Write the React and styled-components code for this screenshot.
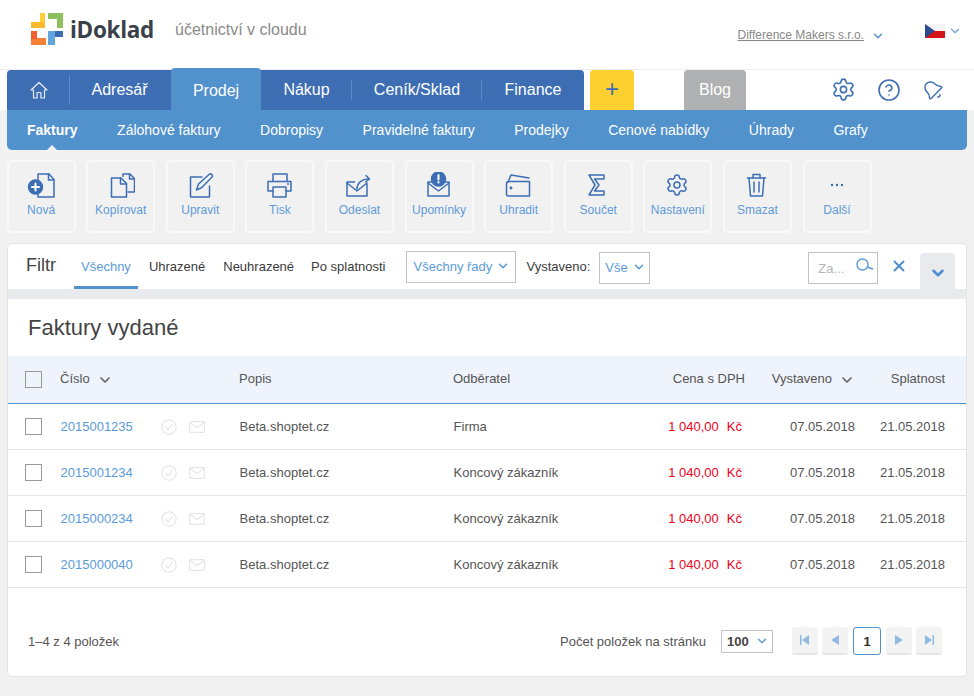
import React from 'react';
import styled, { createGlobalStyle } from 'styled-components';
import { ChevronDown, Settings, CircleHelp, Bell, X } from 'lucide-react';

const Global = createGlobalStyle`
  html, body { margin: 0; padding: 0; background: #f1f1f1; }
  body { font-family: "Liberation Sans", Arial, sans-serif; color: #444; width: 974px; height: 696px; overflow: hidden; }
  * { box-sizing: border-box; }
`;

const Page = styled.div`display: flex; flex-direction: column; width: 974px; height: 696px;`;
const Header = styled.header`
  height: 70px; background: #fff; border-bottom: 1px solid #eee;
  display: flex; align-items: center; padding: 0 12px 0 31px;
`;
const Brand = styled.div`display: flex; align-items: center; gap: 7px; margin-top: -11px;`;
const BrandName = styled.span`font: 700 22.5px "Open Sans", sans-serif; color: #39424b; letter-spacing: -0.3px;`;
const Slogan = styled.span`font-size: 16px; color: #8a8a8a; margin-left: 21px; margin-top: -9px;`;
const Company = styled.a`font-size: 12px; color: #888; text-decoration: underline; margin-left: auto; margin-top: 0;`;
const CompanyChevron = styled(ChevronDown)`color: #5b96d2; margin-left: 7px; margin-top: 2px;`;
const Lang = styled.div`display: flex; align-items: center; gap: 3px; margin-left: 40px; margin-top: -8px;`;

const NavStrip = styled.nav`height: 40px; background: #fff; display: flex; padding: 0 7px;`;
const NavTabs = styled.div`display: flex; background: #3d6eb4; border-radius: 4px 4px 0 0; height: 40px;`;
const NavTab = styled.a`
  width: ${p => p.$w}px; height: ${p => (p.$active ? 42 : 40)}px;
  margin-top: ${p => (p.$active ? -2 : 0)}px;
  padding-top: ${p => (p.$active ? 3 : 0)}px;
  padding-right: ${p => p.$pr || 0}px;
  background: ${p => (p.$active ? '#5191cc' : 'transparent')};
  border-radius: ${p => (p.$active ? '4px 4px 0 0' : '0')};
  color: #fff; font-size: 16px; position: relative;
  display: flex; align-items: center; justify-content: center;
  padding-bottom: ${p => (p.$active ? 0 : 1)}px;
  ${p => p.$sep && `
    &::after { content: ""; position: absolute; right: 0; top: 10px; height: 20px; width: 1px; background: #5f8cc6; }
  `}
  ${p => p.$home && `
    &::after { content: ""; position: absolute; right: 0; top: 5px; height: 30px; width: 1px; background: #5f8cc6; }
  `}
`;
const PlusTab = styled.a`
  width: 44px; height: 40px; margin-left: 6px; background: #fdcf2f; color: #3d6eb4; border-radius: 4px 4px 0 0;
  display: flex; align-items: center; justify-content: center; font-size: 24px; padding-bottom: 2px; 
`;
const BlogTab = styled.a`
  width: 62px; height: 40px; margin-left: 50px; background: #b0b1b3; color: #fff; border-radius: 4px 4px 0 0;
  display: flex; align-items: center; justify-content: center; font-size: 16px; padding-bottom: 1px;
`;
const NavIcons = styled.div`display: flex; align-items: center; margin-left: 85px; gap: 21px; color: #3d6eb4; padding-bottom: 1px;`;
const TiltBell = styled(Bell)`transform: rotate(-45deg);`;

const SubNav = styled.div`
  height: 40px; margin: 0 7px; background: #5191cc; border-radius: 0 0 5px 5px;
  display: flex; align-items: center; gap: 39.5px; padding: 0 0 1px 20px;
`;
const SubItem = styled.a`
  color: #fff; font-size: 14px; font-weight: ${p => (p.$active ? 700 : 400)}; position: relative;
  ${p => p.$active && `
    &::after { content: ""; position: absolute; left: 50%; margin-left: -6px; top: 23px;
      border: 6px solid transparent; border-top: 0; border-bottom: 6px solid #f1f1f1; }
  `}
`;

const Toolbar = styled.div`display: flex; gap: 10.6px; padding: 10px 0 10px 6.6px; height: 93px;`;
const ToolButton = styled.a`
  width: 69px; height: 73px; border: 2px solid #f9f9f9; border-radius: 5px; flex: none;
  display: flex; flex-direction: column; align-items: center; padding-top: 10px;
  color: #5f9ad8; font-size: 12px;
`;
const ToolIcon = styled.svg`
  width: 28px; height: 26px; margin-bottom: 5px; fill: none; stroke: #3d6eb4; stroke-width: 1.5;
  stroke-linejoin: round; stroke-linecap: round;
`;

const Panel = styled.section`
  margin: 0 7px; height: 434px; background: #fff; border: 1px solid #e4e4e4; border-radius: 5px;
  display: flex; flex-direction: column;
`;
const FilterRow = styled.div`height: 45px; display: flex; align-items: flex-start; padding-left: 18px;`;
const FilterTitle = styled.span`font-size: 18px; color: #444; margin-top: 11px; width: 48px;`;
const FilterTab = styled.a`
  height: 45px; padding: 15px 7px 0; font-size: 13px; margin-right: ${p => p.$mr || 0}px;
  color: ${p => (p.$active ? '#5b9bd9' : '#3c3c3c')};
  border-bottom: 3px solid ${p => (p.$active ? '#5191cc' : 'transparent')};
`;
const Select = styled.div`
  height: ${p => p.$h}px; width: ${p => p.$w}px; margin-top: ${p => p.$top}px; margin-left: ${p => p.$ml}px;
  border: 1px solid #bfc1cb; display: flex; align-items: center; padding: 0 0 2px ${p => p.$pl}px; gap: 4px;
  color: #5b9bd9; font-size: 13px;
`;
const FilterLabel = styled.span`font-size: 13px; color: #3c3c3c; margin: 15px 0 0 11px;`;
const SearchBox = styled.div`
  width: 70px; height: 32px; margin: 8px 0 0 158px; border: 1px solid #bfc1cb; display: flex; align-items: center;
  padding-left: 9px; color: #b5b5b5; font-size: 13px; position: relative;
`;
const SearchGlyph = styled.svg`
  position: absolute; left: 47px; top: 5px; width: 18px; height: 16px; fill: none; stroke: #5b9bd9; stroke-width: 1.4;
`;
const ClearIcon = styled(X)`color: #4f8ed2; margin: 13px 0 0 12px;`;
const CollapseTab = styled.div`
  width: 35px; height: 36px; margin: 9px 0 0 12px; background: #e8eaed; border-radius: 4px 4px 0 0; color: #4f8ed2;
  display: flex; align-items: center; justify-content: center; padding-top: 4px;
`;
const Band = styled.div`height: 10px; background: #e8eaed;`;
const Title = styled.h1`font-size: 22px; font-weight: 400; color: #444; margin: 0; height: 57px; padding: 17px 0 0 20px; line-height: 24px;`;

const COLS = '35px 179px 214px 192px 100px 110px 90px';
const HeadRow = styled.div`
  display: grid; grid-template-columns: ${COLS}; height: 48px; align-items: center; padding: 0 0 0 17px;
  background: #eff3fb; border-bottom: 1px solid #5191cc; font-size: 13px; color: #555;
`;
const Row = styled.div`
  display: grid; grid-template-columns: ${COLS}; height: 46px; align-items: center; padding: 0 0 0 17px;
  border-bottom: 1px solid #e4e4e4; font-size: 13px; color: #555;
`;
const Box = styled.span`display: block; width: 17px; height: 17px; border: 1px solid #7b7b7b; outline: 0.5px solid #9a9a9a; outline-offset: -1.5px;`;
const HeadCell = styled.div`
  display: flex; align-items: center; padding-bottom: 3px;
  justify-content: ${p => (p.$right ? 'flex-end' : 'flex-start')};
`;
const SortIcon = styled(ChevronDown)`color: #666; margin-left: ${p => p.$ml}px; margin-top: 3px;`;
const NumberCell = styled.div`display: flex; align-items: center;`;
const InvoiceLink = styled.a`color: #5b9bd9; width: 101px; padding: 0 0 1px 0.5px;`;
const FaintIcon = styled.svg`fill: none; stroke: #e6e6e6; stroke-width: 1.2; margin: 1px ${p => p.$mr || 0}px 0 0;`;
const TextCell = styled.div`padding: 0 0 1px 0.6px;`;
const PriceCell = styled.div`color: #f0001c; text-align: right; padding: 0 3px 1px 0; white-space: nowrap;`;
const Currency = styled.span`margin-left: 8px;`;
const DateCell = styled.div`text-align: right; padding-bottom: 1px; white-space: nowrap;`;

const Footer = styled.div`flex: 1; display: flex; align-items: center; padding: 18px 24px 0 20px; font-size: 13px; color: #555;`;
const FooterCount = styled.span`margin-right: auto;`;
const PerPage = styled.div`
  width: 52px; height: 23px; margin-left: 15px; border: 1px solid #bfc1cb; display: flex; align-items: center; padding-left: 5px;
  gap: 6px; font-weight: 700; color: #444;
`;
const Pager = styled.div`display: flex; gap: 4px; margin-left: 19px;`;
const PageBtn = styled.a`
  width: ${p => (p.$active ? 28 : 26)}px; height: 28px; border-radius: 3px;
  margin: ${p => (p.$active ? '0 1px' : '0')};
  background: ${p => (p.$active ? '#fff' : '#f3f3f3')};
  border: ${p => (p.$active ? '1px solid #5191cc' : 'none')};
  border-bottom: ${p => (p.$active ? '1px solid #5191cc' : '2px solid #e6e6e6')};
  display: flex; align-items: center; justify-content: center; font-weight: 700; color: #333; font-size: 13px;
`;
const PagerGlyph = styled.svg`width: 12px; height: 12px; fill: #8fbbe2;`;

const Logo = () => (
  <svg width="32" height="32" viewBox="31 13 32 32">
    <path d="M40 13h5v15H31v-6h9z" fill="#fbb92d" />
    <path d="M40 13h5v9h-5z" fill="#fdcf2f" />
    <path d="M48 13h15v15h-6v-9h-9z" fill="#8fc060" />
    <path d="M31 31h6v7h9v7H31z" fill="#f47f36" />
    <path d="M31 31h6v8h-6z" fill="#ee5e2e" />
    <path d="M48 31h15v6h-8v8h-7z" fill="#62a5dd" />
    <path d="M55 31h8v6h-8z" fill="#3d6eb4" />
  </svg>
);

const Flag = () => (
  <svg width="20" height="14" viewBox="0 0 20 14">
    <rect width="20" height="7" fill="#f4f4f6" />
    <rect y="7" width="20" height="7" fill="#d7141a" />
    <path d="M0 0l10 7-10 7z" fill="#2b4a8f" />
  </svg>
);

const HomeIcon = () => (
  <svg width="18" height="18" viewBox="0 0 18 18" fill="none" stroke="#e8eef7" strokeWidth="1.2" strokeLinejoin="round">
    <path d="M1 9l8-7.500L17 9h-2.500v8h-3.600v-5.500H7.100V17H3.500V9z" />
  </svg>
);

const tools = [
  ['Nová', <>
    <path d="M11 2h11l5 5.500V25H11z" /><path d="M21.500 2v6H27" />
    <circle cx="8.500" cy="15" r="7" fill="#3d6eb4" />
    <path d="M8.500 11.500v7M5 15h7" stroke="#fff" strokeWidth="2" />
  </>],
  ['Kopírovat', <>
    <path d="M16 4.500V2h7l4.500 4.500V20H21" /><path d="M22.500 2v5h5" />
    <path d="M4.500 6H14l5.500 5.500V25h-15z" /><path d="M13.500 6v6h6" />
  </>],
  ['Upravit', <>
    <path d="M23.500 14v11h-19V5H16" />
    <path d="M10.500 18l2-6L23 2.500c1-.8 2-.8 2.800 0 .8.900.8 1.900 0 2.800L15.500 15.700z" />
  </>],
  ['Tisk', <>
    <path d="M7 9V2h14v7" />
    <path d="M7 19H2V9.500h23V19h-5" />
    <path d="M7 15h13v10H7z" /><path d="M21.500 12h1" />
  </>],
  ['Odeslat', <>
    <path d="M9.500 10H2v14h20V12" /><path d="M2 11l10 8 10-8" />
    <path d="M12 17c0-6 5-10.500 12-10" /><path d="M21 3.500l3.500 3.500-4 3" />
  </>],
  ['Upomínky', <>
    <path d="M7 10H3v14h21V10h-4" /><path d="M3 11l10.500 8L24 11" />
    <circle cx="13.500" cy="7" r="7" fill="#3d6eb4" />
    <path d="M13.500 3v4.500" stroke="#fff" strokeWidth="2" /><path d="M13.500 10v.5" stroke="#fff" strokeWidth="2" />
  </>],
  ['Uhradit', <>
    <path d="M3 10L6 3l18 3" />
    <path d="M1.500 12c0-1.500 1-2.500 2.500-2.500h20.500V24H3.500c-1.200 0-2-.8-2-2z" />
    <circle cx="6" cy="16" r=".7" fill="#3d6eb4" />
  </>],
  ['Součet', <path d="M5 3h15v4h-9.500l4.500 6-4.500 6H20v4H5l6-10z" />],
  ['Nastavení', <g transform="translate(1 1)"><path d="M9.671 4.136a2.340 2.340 0 0 1 4.659 0 2.340 2.340 0 0 0 3.319 1.915 2.340 2.340 0 0 1 2.330 4.033 2.340 2.340 0 0 0 0 3.831 2.340 2.340 0 0 1-2.330 4.033 2.340 2.340 0 0 0-3.319 1.915 2.340 2.340 0 0 1-4.659 0 2.340 2.340 0 0 0-3.320-1.915 2.340 2.340 0 0 1-2.330-4.033 2.340 2.340 0 0 0 0-3.831A2.340 2.340 0 0 1 6.350 6.051a2.340 2.340 0 0 0 3.319-1.915" /><circle cx="12" cy="12" r="3" /></g>],
  ['Smazat', <>
    <path d="M4.500 6h18" /><path d="M10 6V2.500h7V6" />
    <path d="M6 6l1.500 18h12L21 6" /><path d="M11 10v10M16 10v10" />
  </>],
  ['Další', <g fill="#3d6eb4" stroke="none"><circle cx="9" cy="13" r="1.200" /><circle cx="14" cy="13" r="1.200" /><circle cx="19" cy="13" r="1.200" /></g>],
];

const rows = [
  ['2015001235', 'Firma'],
  ['2015001234', 'Koncový zákazník'],
  ['2015000234', 'Koncový zákazník'],
  ['2015000040', 'Koncový zákazník'],
];

const subs = ['Zálohové faktury', 'Dobropisy', 'Pravidelné faktury', 'Prodejky', 'Cenové nabídky', 'Úhrady', 'Grafy'];

export default function App() {
  return (
    <Page>
      <Global />
      <Header>
        <Brand><Logo /><BrandName>iDoklad</BrandName></Brand>
        <Slogan>účetnictví v cloudu</Slogan>
        <Company>Difference Makers s.r.o.</Company>
        <CompanyChevron size={14} strokeWidth={2.8} />
        <Lang><Flag /><ChevronDown size={14} strokeWidth={2.2} color="#6fa3da" /></Lang>
      </Header>
      <NavStrip>
        <NavTabs>
          <NavTab $w={63} $home><HomeIcon /></NavTab>
          <NavTab $w={101} $pr={2}>Adresář</NavTab>
          <NavTab $w={90} $active>Prodej</NavTab>
          <NavTab $w={91} $sep>Nákup</NavTab>
          <NavTab $w={130} $sep>Ceník/Sklad</NavTab>
          <NavTab $w={102}>Finance</NavTab>
        </NavTabs>
        <PlusTab>+</PlusTab>
        <BlogTab>Blog</BlogTab>
        <NavIcons>
          <Settings size={25} strokeWidth={1.5} />
          <CircleHelp size={24} strokeWidth={1.6} />
          <TiltBell size={22} strokeWidth={1.6} />
        </NavIcons>
      </NavStrip>
      <SubNav>
        <SubItem $active>Faktury</SubItem>
        {subs.map(s => <SubItem key={s}>{s}</SubItem>)}
      </SubNav>
      <Toolbar>
        {tools.map(([label, icon]) => (
          <ToolButton key={label}>
            <ToolIcon viewBox="0 0 28 26">{icon}</ToolIcon>
            {label}
          </ToolButton>
        ))}
      </Toolbar>
      <Panel>
        <FilterRow>
          <FilterTitle>Filtr</FilterTitle>
          <FilterTab $active $mr={4}>Všechny</FilterTab>
          <FilterTab $mr={4}>Uhrazené</FilterTab>
          <FilterTab $mr={3}>Neuhrazené</FilterTab>
          <FilterTab>Po splatnosti</FilterTab>
          <Select $w={110} $h={32} $top={7} $ml={13} $pl={7}>Všechny řady <ChevronDown size={14} strokeWidth={2.6} /></Select>
          <FilterLabel>Vystaveno:</FilterLabel>
          <Select $w={51} $h={32} $top={8} $ml={9} $pl={5}>Vše <ChevronDown size={14} strokeWidth={2.6} /></Select>
          <SearchBox>
            Za...
            <SearchGlyph viewBox="0 0 18 16"><circle cx="6.500" cy="6.500" r="5.500" /><path d="M11 9l6 2" /></SearchGlyph>
          </SearchBox>
          <ClearIcon size={18} strokeWidth={2.6} />
          <CollapseTab><ChevronDown size={18} strokeWidth={3.4} /></CollapseTab>
        </FilterRow>
        <Band />
        <Title>Faktury vydané</Title>
        <HeadRow>
          <Box />
          <HeadCell>Číslo<SortIcon size={16} $ml={7} strokeWidth={2.6} /></HeadCell>
          <HeadCell>Popis</HeadCell>
          <HeadCell>Odběratel</HeadCell>
          <HeadCell $right>Cena s DPH</HeadCell>
          <HeadCell $right>Vystaveno<SortIcon size={16} $ml={7} strokeWidth={2.6} /></HeadCell>
          <HeadCell $right>Splatnost</HeadCell>
        </HeadRow>
        {rows.map(([num, who]) => (
          <Row key={num}>
            <Box />
            <NumberCell>
              <InvoiceLink>{num}</InvoiceLink>
              <FaintIcon width="16" height="16" viewBox="0 0 16 16" $mr={12}><circle cx="8" cy="8" r="7.200" /><path d="M4.500 8l2.500 3 4.500-6" /></FaintIcon>
              <FaintIcon width="16" height="12" viewBox="0 0 16 12"><rect x=".6" y=".6" width="14.800" height="10.800" rx="1" /><path d="M1 1.500l7 5 7-5" /></FaintIcon>
            </NumberCell>
            <TextCell>Beta.shoptet.cz</TextCell>
            <TextCell>{who}</TextCell>
            <PriceCell>1 040,00<Currency>Kč</Currency></PriceCell>
            <DateCell>07.05.2018</DateCell>
            <DateCell>21.05.2018</DateCell>
          </Row>
        ))}
        <Footer>
          <FooterCount>1–4 z 4 položek</FooterCount>
          Počet položek na stránku
          <PerPage>100 <ChevronDown size={14} strokeWidth={2.4} color="#5b9bd9" /></PerPage>
          <Pager>
            <PageBtn><PagerGlyph viewBox="0 0 12 12"><path d="M1 1h1.500v10H1zM10 1v10L3 6z" /></PagerGlyph></PageBtn>
            <PageBtn><PagerGlyph viewBox="0 0 12 12"><path d="M10 1v10L2 6z" /></PagerGlyph></PageBtn>
            <PageBtn $active>1</PageBtn>
            <PageBtn><PagerGlyph viewBox="0 0 12 12"><path d="M2 1v10l8-5z" /></PagerGlyph></PageBtn>
            <PageBtn><PagerGlyph viewBox="0 0 12 12"><path d="M2 1v10l7-5zM9.500 1H11v10H9.500z" /></PagerGlyph></PageBtn>
          </Pager>
        </Footer>
      </Panel>
    </Page>
  );
}
